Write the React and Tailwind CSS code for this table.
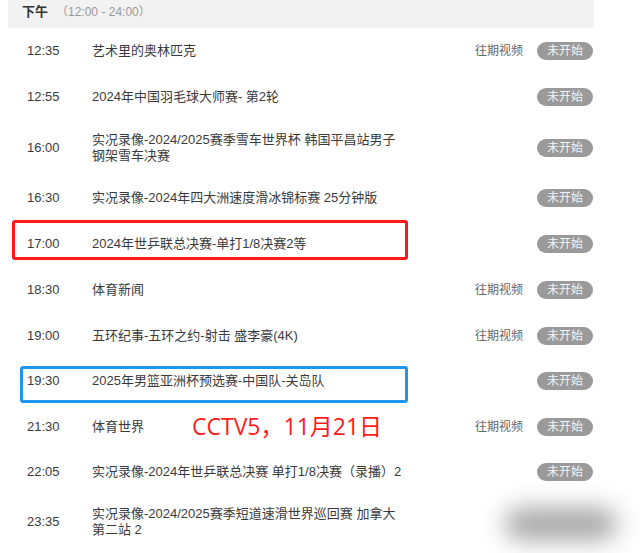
import React from "react";

const H = {
  46: "h-[46px]",
  55: "h-[55px]",
  45: "h-[45px]",
  44: "h-[44px]",
  56: "h-[56px]",
};

const rows = [
  { t: "12:35", lines: ["艺术里的奥林匹克"], past: true, h: 46 },
  { t: "12:55", lines: ["2024年中国羽毛球大师赛- 第2轮"], h: 46 },
  { t: "16:00", lines: ["实况录像-2024/2025赛季雪车世界杯 韩国平昌站男子", "钢架雪车决赛"], h: 55 },
  { t: "16:30", lines: ["实况录像-2024年四大洲速度滑冰锦标赛 25分钟版"], h: 46 },
  { t: "17:00", lines: ["2024年世乒联总决赛-单打1/8决赛2等"], h: 46 },
  { t: "18:30", lines: ["体育新闻"], past: true, h: 46 },
  { t: "19:00", lines: ["五环纪事-五环之约-射击 盛李豪(4K)"], past: true, h: 45 },
  { t: "19:30", lines: ["2025年男篮亚洲杯预选赛-中国队-关岛队"], h: 46 },
  { t: "21:30", lines: ["体育世界"], past: true, h: 46 },
  { t: "22:05", lines: ["实况录像-2024年世乒联总决赛 单打1/8决赛（录播）2"], h: 44 },
  { t: "23:35", lines: ["实况录像-2024/2025赛季短道速滑世界巡回赛 加拿大", "第二站 2"], blur: true, h: 56 },
];

export default function App() {
  return (
    <div className="relative w-[640px] h-[553px] overflow-hidden bg-white font-['Liberation_Sans','Noto_Sans_CJK_SC',sans-serif] text-[#333]">
      <div className="ml-[8px] w-[586px] h-[28px] bg-[#f2f2f2] flex items-center pl-[14px] pb-[4px]">
        <span className="text-[13px] font-bold text-[#333]">下午</span>
        <span className="ml-[8px] text-[12px] text-[#999]">（12:00 - 24:00）</span>
      </div>
      <div className="w-[640px]">
        {rows.map((r) => (
          <div key={r.t} className={`${H[r.h]} flex items-center pl-[27px] pr-[47px]`}>
            <div className="w-[65px] shrink-0 text-[13px] leading-4 text-[#3a3a3a]">{r.t}</div>
            <div className="flex-1 text-[13px] leading-4 text-[#3a3a3a]">
              {r.lines.map((l, i) => (
                <div key={i} className="whitespace-nowrap">{l}</div>
              ))}
            </div>
            {r.past && <div className="text-[12px] text-[#666] mr-[14px] leading-4">往期视频</div>}
            {r.blur ? (
              <div className="relative w-[56px] h-[18px]">
                <div className="absolute left-[-32px] top-[-5px] w-[112px] h-[32px] rounded-full bg-[#a6a6a6] blur-[12px]" />
              </div>
            ) : (
              <div className="w-[56px] h-[18px] rounded-full bg-[#9a9a9a] text-[#f4f4f4] text-[12px] leading-[18px] text-center">未开始</div>
            )}
          </div>
        ))}
      </div>

      <div className="absolute left-[12px] top-[220px] w-[396px] h-[40px] border-[3px] border-[#ff1a1a] rounded-[3px]" />
      <div className="absolute left-[20px] top-[366px] w-[388px] h-[37px] border-[3px] border-[#1e96f0] rounded-[3px]" />
      <div className="absolute left-[192px] top-[411px] text-[23px] leading-[30px] text-[#ff1a1a] font-['Open_Sans','Noto_Sans_CJK_SC',sans-serif] whitespace-nowrap">
        CCTV5，11月21日
      </div>
    </div>
  );
}
